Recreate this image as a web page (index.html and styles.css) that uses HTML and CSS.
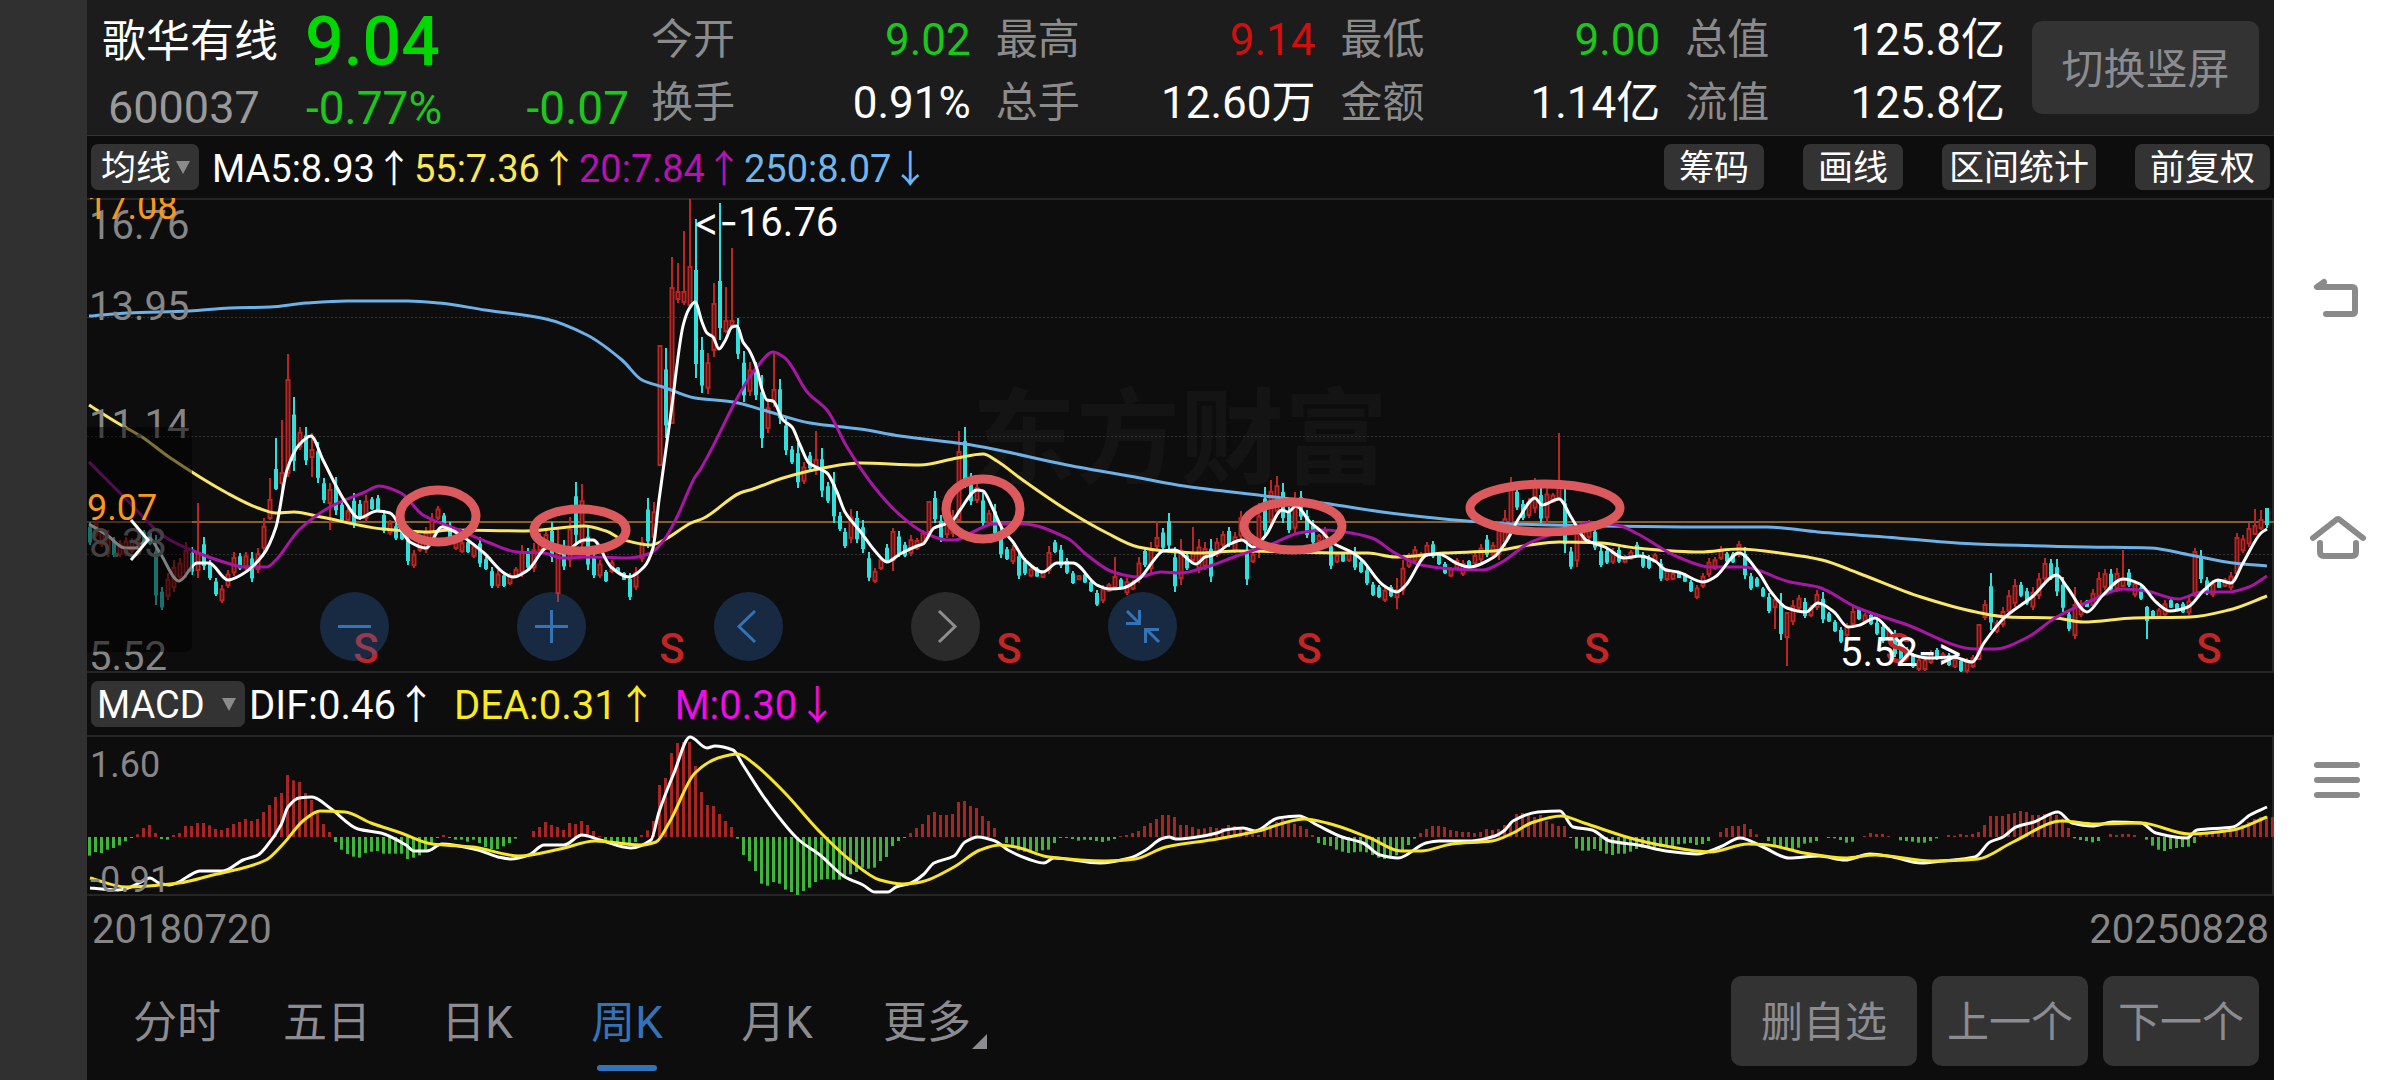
FILE: index.html
```html
<!DOCTYPE html>
<html lang="zh-CN">
<head>
<meta charset="utf-8">
<meta name="viewport" content="width=device-width, initial-scale=1">
<title>歌华有线 600037</title>
<link rel="stylesheet" href="styles.css">
</head>
<body>
<div class="screen">
  <div class="notch"></div>
  <main class="app">
    <header class="quote">
      <div class="stock">
        <div class="stock-row">
          <h1 class="name">歌华有线</h1>
          <span class="price down">9.04</span>
        </div>
        <div class="stock-row stock-sub">
          <span class="code">600037</span>
          <span class="percent down">-0.77%</span>
          <span class="change down">-0.07</span>
        </div>
      </div>
      <dl class="stats">
        <div class="stat"><dt>今开</dt><dd class="down">9.02</dd></div>
        <div class="stat"><dt>最高</dt><dd class="up">9.14</dd></div>
        <div class="stat"><dt>最低</dt><dd class="down">9.00</dd></div>
        <div class="stat"><dt>总值</dt><dd>125.8亿</dd></div>
        <div class="stat"><dt>换手</dt><dd>0.91%</dd></div>
        <div class="stat"><dt>总手</dt><dd>12.60万</dd></div>
        <div class="stat"><dt>金额</dt><dd>1.14亿</dd></div>
        <div class="stat"><dt>流值</dt><dd>125.8亿</dd></div>
      </dl>
      <button class="btn rotate" type="button">切换竖屏</button>
    </header>

    <section class="toolbar">
      <span class="picker picker-ma"><select aria-label="主图指标"><option>均线</option></select></span>
      <p class="legend ma-legend">
        <span class="c-white">MA5:8.93↑</span><span class="c-yellow">55:7.36↑</span><span class="c-purple">20:7.84↑</span><span class="c-blue">250:8.07↓</span>
      </p>
      <div class="tools">
        <button class="chip" type="button">筹码</button>
        <button class="chip" type="button">画线</button>
        <button class="chip chip-tight" type="button">区间统计</button>
        <button class="chip" type="button">前复权</button>
      </div>
    </section>

    <section class="chart">
      <svg class="plot" viewBox="87 198 2187 475" role="img" aria-label="周K线">
        <text class="watermark" x="972" y="476">东方财富</text>
        <path class="grid" d="M87 317.5H2273M87 436.5H2273M87 554.5H2273"/>
        <path class="frame" d="M87 199H2273V672H87"/>
        <path class="last" d="M87 522H2274"/>
        <g id="candles"></g>
        <path class="line s-blue" data-points="89,316 128,313 189,311 230,308 270,307 306,303 347,301 408,301 439,303 485,310 546,319 587,335 622,360 642,380 663,387 695,398 733,402 763,410 810,423 860,429 900,436 965,444 993,449 1067,465 1140,478 1184,486 1265,496 1322,503 1398,514 1467,521 1513,524 1700,527 1767,527 1818,532 1897,538 1976,544 2087,547 2150,548 2190,555 2233,563 2267,566"/>
        <path class="line s-yellow" data-points="89,405 116,422 142,437 169,457 227,493 258,508 276,513 294,512 321,517 383,529 428,532 450,530 526,531 584,526 606,531 624,540 651,545 664,540 691,523 704,518 740,493 753,489 783,478 823,468 860,463 920,465 957,458 983,454 997,461 1020,478 1070,512 1107,533 1138,547 1165,551 1200,553 1238,551 1345,553 1368,553 1395,557 1444,553 1494,551 1529,545 1559,542 1601,543 1636,548 1700,552 1739,549 1787,554 1822,560 1858,573 1921,597 1976,612 2008,617 2055,618 2083,622 2134,618 2190,617 2229,610 2267,596"/>
        <path class="line s-purple" data-points="89,462 125,498 165,537 191,550 227,563 245,567 267,567 276,560 299,530 330,507 365,492 379,486 401,493 423,515 459,530 490,543 517,552 544,553 562,558 593,557 629,558 651,553 664,540 677,517 695,477 700,470 710,452 740,393 757,367 773,352 785,358 808,393 827,410 847,447 875,488 900,515 923,532 947,540 955,540 973,532 993,524 1023,524 1067,538 1087,555 1113,572 1138,577 1161,572 1180,573 1207,567 1234,557 1272,544 1299,533 1326,530 1345,532 1372,538 1395,553 1421,565 1452,569 1483,570 1502,562 1529,543 1559,532 1590,523 1617,525 1636,533 1678,557 1711,567 1743,567 1790,582 1818,587 1858,608 1905,624 1976,649 1996,649 2028,637 2055,618 2095,599 2123,589 2146,591 2178,599 2202,592 2229,592 2249,587 2267,576"/>
        <path class="line s-white" data-points="89,524 107,535 125,548 136,548 149,538 160,553 179,581 197,563 209,563 228,580 241,575 263,555 276,527 287,470 299,445 311,436 323,460 346,503 359,518 377,511 390,513 410,542 426,548 442,527 457,533 484,553 504,573 513,577 528,570 548,547 562,553 584,540 593,540 611,567 629,577 644,567 653,548 659,500 671,413 683,326 689,309 695,302 702,322 707,333 713,337 719,349 725,341 732,327 737,326 743,342 749,350 757,369 762,389 767,400 773,401 783,420 792,427 800,445 809,463 820,469 827,473 837,492 845,512 860,531 875,551 887,562 900,554 917,546 923,544 934,528 945,524 953,520 960,510 977,490 983,491 993,509 1003,530 1013,542 1025,560 1043,572 1057,563 1073,563 1097,585 1110,589 1123,588 1140,578 1154,560 1163,551 1175,550 1196,564 1205,557 1213,555 1230,544 1242,540 1253,547 1266,535 1282,510 1288,512 1296,506 1310,522 1322,532 1333,543 1353,553 1362,560 1383,585 1397,592 1406,585 1427,555 1439,554 1456,563 1469,567 1494,557 1506,542 1519,518 1535,498 1542,505 1559,499 1571,517 1586,540 1605,547 1624,558 1640,556 1655,561 1666,570 1678,572 1703,582 1715,577 1739,553 1759,573 1771,592 1787,608 1806,612 1818,603 1834,612 1848,627 1860,625 1875,618 1889,630 1913,655 1929,658 1953,657 1972,662 1984,643 2004,618 2032,597 2057,575 2067,587 2087,612 2103,595 2123,579 2140,584 2156,602 2170,611 2188,607 2204,590 2218,580 2231,583 2243,563 2261,533 2267,529"/>
        <g class="axis">
          <text x="89" y="239">16.76</text>
          <text x="89" y="320">13.95</text>
          <text x="89" y="438">11.14</text>
          <text x="89" y="557">8.33</text>
          <text x="89" y="670">5.52</text>
        </g>
        <path class="drawer" d="M87 427H184Q192 427 192 435V644Q192 652 184 652H87Z"/>
        <path class="drawer-arrow" d="M131 520L148 540L131 560"/>
        <text class="cursor" x="87" y="219">17.08</text>
        <text class="cursor" x="87" y="520">9.07</text>
        <g class="signal">
          <text x="366" y="663">S</text><text x="672" y="663">S</text><text x="1009" y="663">S</text><text x="1309" y="663">S</text><text x="1597" y="663">S</text><text x="1898" y="663">S</text><text x="2209" y="663">S</text>
        </g>
        <text class="extreme" x="693" y="236"><tspan class="arrow">&lt;-</tspan>16.76</text>
        <text class="extreme" x="1840" y="666">5.52<tspan class="arrow">-&gt;</tspan></text>
        <g class="marks">
          <ellipse cx="438" cy="516" rx="38" ry="26"/>
          <ellipse cx="580" cy="530" rx="46" ry="21"/>
          <ellipse cx="983" cy="509" rx="37" ry="30"/>
          <ellipse cx="1293" cy="526" rx="49" ry="24"/>
          <ellipse cx="1545" cy="508" rx="75" ry="24"/>
        </g>
      </svg>
      <div class="controls">
        <button class="round" type="button" aria-label="缩小"><svg viewBox="0 0 69 69"><path d="M18 34.5H51"/></svg></button>
        <button class="round" type="button" aria-label="放大"><svg viewBox="0 0 69 69"><path d="M18 34.5H51M34.5 18V51"/></svg></button>
        <button class="round" type="button" aria-label="左移"><svg viewBox="0 0 69 69"><path d="M41 19L25 34.5L41 50"/></svg></button>
        <button class="round round-off" type="button" aria-label="右移"><svg viewBox="0 0 69 69"><path d="M28 19L44 34.5L28 50"/></svg></button>
        <button class="round" type="button" aria-label="收起"><svg viewBox="0 0 69 69"><path d="M19 19L32 32M18 31.5H31.5V18M51 50L38 37M51 37.5H37.5V51"/></svg></button>
      </div>
    </section>

    <section class="toolbar">
      <span class="picker picker-macd"><select aria-label="副图指标"><option>MACD</option></select></span>
      <p class="legend macd-legend">
        <span class="c-white">DIF:0.46↑</span><span class="c-dea">DEA:0.31↑</span><span class="c-m">M:0.30↓</span>
      </p>
    </section>

    <section class="chart">
      <svg class="plot" viewBox="87 735 2187 161" role="img" aria-label="MACD">
        <path class="frame" d="M87 736H2273V895H87"/>
        <g id="bars"></g>
        <path class="line s-white" data-points="90,888 102,889 118,890 128,888 139,883 150,878 159,883 169,885 179,882 187,877 200,871 223,871 243,860 258,855 266,847 281,825 288,807 299,798 312,797 330,808 358,829 381,833 406,845 414,851 427,851 442,844 478,850 498,857 511,859 529,855 544,845 564,845 582,835 600,840 631,848 651,840 659,812 674,773 690,737 707,748 715,746 733,750 743,765 766,800 799,840 820,855 845,877 863,885 875,892 888,892 896,887 911,883 924,874 934,863 954,856 965,842 978,837 995,841 1008,850 1028,859 1044,863 1054,858 1100,863 1130,858 1146,850 1161,839 1169,837 1176,839 1197,837 1217,833 1225,830 1243,828 1255,831 1278,818 1299,816 1317,825 1342,837 1363,843 1380,855 1398,858 1426,843 1439,841 1472,841 1495,836 1505,830 1513,821 1538,812 1560,811 1573,827 1592,830 1610,841 1638,845 1666,851 1697,854 1720,847 1740,838 1763,847 1789,858 1819,856 1845,860 1870,854 1893,857 1921,863 1942,861 1975,857 1990,842 2003,837 2016,827 2034,822 2058,812 2072,823 2092,826 2113,822 2141,823 2156,833 2187,838 2197,830 2233,827 2250,815 2267,807"/>
        <path class="line s-dea" data-points="90,878 126,887 179,883 213,875 243,868 266,860 284,843 304,820 320,811 345,812 371,823 401,833 432,844 473,847 519,856 560,849 595,841 641,845 656,842 669,823 695,773 718,758 738,754 753,763 784,792 820,832 850,860 880,880 903,884 921,882 954,867 980,850 1000,845 1016,847 1049,857 1105,861 1135,859 1166,847 1217,839 1258,831 1304,819 1327,823 1370,838 1401,851 1421,851 1452,844 1492,841 1513,833 1531,823 1561,816 1584,823 1630,838 1660,845 1710,852 1748,844 1768,845 1804,853 1845,858 1875,855 1932,861 1978,859 2013,842 2062,821 2095,824 2141,823 2189,834 2233,830 2267,817"/>
        <g class="axis axis-small">
          <text x="90" y="777">1.60</text>
          <text x="90" y="892">-0.91</text>
        </g>
      </svg>
    </section>

    <div class="dates"><time>20180720</time><time>20250828</time></div>

    <footer class="footer">
      <nav class="tabs">
        <button class="tab" type="button">分时</button>
        <button class="tab" type="button">五日</button>
        <button class="tab" type="button">日K</button>
        <button class="tab tab-on" type="button" aria-current="page">周K</button>
        <button class="tab" type="button">月K</button>
        <button class="tab tab-more" type="button">更多</button>
      </nav>
      <div class="actions">
        <button class="btn action-wide" type="button">删自选</button>
        <button class="btn action" type="button">上一个</button>
        <button class="btn action" type="button">下一个</button>
      </div>
    </footer>
  </main>
  <nav class="system">
    <button class="sys" type="button" aria-label="返回"><svg viewBox="0 0 60 60"><path d="M17 13L10 18H45Q48 18 48 21V42Q48 45 45 45H19"/></svg></button>
    <button class="sys" type="button" aria-label="主页"><svg viewBox="0 0 60 60"><path d="M6 28L29 10Q31 8 33 10L56 28M13 33V42Q13 46 17 46H45Q49 46 49 42V33"/></svg></button>
    <button class="sys" type="button" aria-label="菜单"><svg viewBox="0 0 60 60"><path d="M10 14H50M10 29H50M10 44H50"/></svg></button>
  </nav>
</div>
<script src="chart.js"></script>
</body>
</html>
```

FILE: styles.css
```css
* { box-sizing: border-box; }

body {
  margin: 0;
  background: #fff;
  color: #fff;
  font-family: Roboto, "Noto Sans CJK SC", sans-serif;
  line-height: 1;
}

button, select {
  margin: 0;
  padding: 0;
  border: 0;
  background: none;
  color: inherit;
  font: inherit;
}

.screen { display: flex; min-height: 100vh; }
.notch { flex: 0 0 87px; background: #303030; }
.app { flex: 1; min-width: 0; display: flex; flex-direction: column; background: #0d0d0d; }

.down { color: #1bc71b; }
.up { color: #cf100e; }

/* Quote header */
.quote {
  display: flex;
  align-items: center;
  height: 136px;
  padding-right: 15px;
  background: #1c1c1c;
  border-bottom: 1px solid #333;
}
.stock { flex: 0 0 564px; padding: 12px 0 0 15px; }
.stock-row { display: flex; align-items: center; height: 68px; }
.name { margin: 0 27px 0 0; font-size: 44px; font-weight: 400; }
.price { color: #00d900; font-size: 68px; font-weight: 500; }
.stock-sub { padding: 0 22px 0 6px; height: 64px; }
.code { width: 198px; color: #999; font-size: 45px; }
.percent, .change { font-size: 46px; }
.change { margin-left: auto; }

.stats {
  flex: 1;
  display: grid;
  grid-template-columns: repeat(4, 1fr);
  column-gap: 25px;
  margin: 0;
  padding-top: 8px;
}
.stat { display: flex; align-items: center; justify-content: space-between; height: 63px; }
.stat dt { color: #8b8b8b; font-size: 42px; }
.stat dd { margin: 0; font-size: 44px; }

.btn {
  padding-top: 4px;
  border-radius: 10px;
  background: #333;
  color: #8b8b90;
  font-size: 42px;
  white-space: nowrap;
}
.rotate { flex: 0 0 227px; height: 93px; margin-left: 27px; }

/* Indicator bars */
.toolbar { display: flex; align-items: center; height: 62px; padding: 0 4px; }
.picker {
  position: relative;
  flex: none;
  height: 46px;
  border-radius: 7px;
  background: #333;
}
.picker select { width: 100%; height: 100%; padding: 2px 0 0 10px; appearance: none; }
.picker::after {
  content: "";
  position: absolute;
  top: 17px;
  right: 9px;
  width: 14px;
  height: 13px;
  background: #8b8b8b;
  clip-path: polygon(0 0, 100% 0, 50% 100%);
  pointer-events: none;
}
.picker-ma { width: 108px; font-size: 35px; }
.picker-macd { width: 154px; font-size: 38px; }
.picker-macd select { padding-left: 6px; }
.legend { display: flex; margin: 0; padding-top: 4px; white-space: nowrap; }
.ma-legend { padding-left: 13px; gap: 1px; font-size: 38px; }
.macd-legend { gap: 18px; padding-left: 4px; font-size: 40px; }
.c-white { color: #fff; }
.c-yellow { color: #fbe858; }
.c-purple { color: #b512b1; }
.c-blue { color: #6fb6ee; }
.c-dea { color: #f9ea22; }
.c-m { color: #ef0ce6; }

.tools { display: flex; gap: 39px; margin-left: auto; }
.chip {
  height: 46px;
  padding: 2px 15px 0;
  border-radius: 7px;
  background: #333;
  font-size: 35px;
}
.chip-tight { padding: 2px 7px 0; }

/* Charts */
.chart { position: relative; }
.plot { display: block; width: 100%; height: auto; }
.grid { stroke: #333; stroke-width: 1; stroke-dasharray: 2 2; fill: none; }
.frame { stroke: #252525; stroke-width: 2; fill: none; }
.last { stroke: #86602f; stroke-width: 2; }
.watermark { fill: #141414; font-size: 104px; font-weight: 700; }
.line { fill: none; stroke-width: 3; stroke-linejoin: round; }
.s-white { stroke: #fff; }
.s-yellow { stroke: #fbe767; }
.s-purple { stroke: #a916a6; }
.s-blue { stroke: #6cb2e8; }
.s-dea { stroke: #f6e52c; }
.rise { stroke: #bd2523; fill: #0d0d0d; stroke-width: 2; }
.fall { stroke: #2fe0dc; fill: #2fe0dc; stroke-width: 2; }
.bar-up { fill: #a92522; }
.bar-down { fill: #40b53b; }
.axis { fill: #868686; font-size: 40px; }
.axis-small { font-size: 36px; }
.cursor { fill: #f8971d; font-size: 36px; }
.drawer { fill: #000; fill-opacity: .5; }
.drawer-arrow { fill: none; stroke: #fff; stroke-width: 3; }
.signal { fill: #c42523; font-size: 42px; font-weight: 500; text-anchor: middle; }
.extreme { fill: #fff; font-size: 40px; }
.arrow { font-family: Inter, sans-serif; font-feature-settings: "calt" 0, "liga" 0; }
.marks { fill: none; stroke: #dc595d; stroke-width: 9; }

.controls {
  position: absolute;
  left: 233px;
  bottom: 12px;
  display: flex;
  gap: 128px;
}
.round {
  width: 69px;
  height: 69px;
  border-radius: 50%;
  background: rgba(47, 107, 178, .32);
  color: #3573b9;
}
.round-off { background: rgba(110, 110, 110, .32); color: #8f8f8f; }
.round svg { display: block; fill: none; stroke: currentColor; stroke-width: 3; }

.dates {
  display: flex;
  justify-content: space-between;
  align-items: center;
  height: 66px;
  padding: 2px 5px 0;
  color: #868686;
  font-size: 40px;
}

/* Footer */
.footer { display: flex; align-items: center; justify-content: space-between; height: 118px; padding: 0 15px; }
.tabs { display: flex; height: 100%; }
.tab {
  position: relative;
  width: 150px;
  padding-top: 3px;
  color: #8b8b90;
  font-size: 44px;
}
.tab-on { color: #3573b9; }
.tab-on::after {
  content: "";
  position: absolute;
  left: 45px;
  bottom: 9px;
  width: 60px;
  height: 6px;
  border-radius: 3px;
  background: #3573b9;
}
.tab-more::after {
  content: "";
  position: absolute;
  right: 15px;
  bottom: 31px;
  width: 15px;
  height: 15px;
  background: #8b8b90;
  clip-path: polygon(100% 0, 100% 100%, 0 100%);
}
.actions { display: flex; gap: 15px; }
.action, .action-wide { width: 156px; height: 90px; }
.action-wide { width: 186px; }

/* System navigation */
.system {
  flex: 0 0 126px;
  display: flex;
  flex-direction: column;
  align-items: center;
  justify-content: center;
  gap: 181px;
  background: #fff;
}
.sys { width: 60px; height: 60px; }
.sys svg { display: block; fill: none; stroke: #8a8a8a; stroke-width: 6; stroke-linecap: round; stroke-linejoin: round; }
```

FILE: chart.js
```js
const NS = "http://www.w3.org/2000/svg";
const FIRST = 90;
const STEP = 5.996;

// One candle per entry: r (rise) or c (fall), high, low, then the body when it is much shorter.
const candles = `
c522-545 r520-537 r528-547 r530-557 c537-557 r540-557 r537-556 r538-553 r535-550 c530-543
c530-545 c535-605 c587-610 r573-600 r560-592 r558-580 r542-578 c547-575 r503-578-553-570 c537-570
c560-580 c578-596 r585-603 r570-588 r552-576 c553-570 r552-570 c552-582 r548-573 r518-553
r478-520-500-518 c438-490-470-488 r420-491-473-483 r354-477-380-473 c397-471 r427-450 c427-465 r433-477-450-457 c442-483 c478-503
r483-530-490-503 c477-515 c500-523 r508-522 c493-528 c500-520 r495-522 c497-510 c495-512 c510-533
r520-535 c523-540 c527-540 c532-565 r550-568 r537-552 r527-553 r513-543 r506-520 c513-527
c522-540 r537-550 r540-553 c540-553 r543-558 c537-567 c557-570 c567-588 r570-588 c573-587
r573-585 r567-578 r545-577 c548-570 r543-572 r533-553 r530-550 c522-562 r527-602-553-593 c540-570
r517-567 c482-543 r484-553 c527-570 c553-578 r560-578 c570-582 r560-573 c567-573 c572-580
c573-600 r567-590 r537-562 c498-548 r502-543 r345-466-346-465 c348-438 r257-423-288-423 r263-303-292-299 r231-305-292-302
r199-305-267-305 c219-378-271-363 c337-393 r353-394 r283-357-304-350 c203-340-282-327 r287-333-321-331 r248-327-321-325 c318-359 c351-402
r362-396 c362-400 c375-448 r400-433 r352-407-390-402 c379-424 c417-455 c446-464 c443-488 r462-484
c452-470 r431-475-460-470 c448-497 c482-503 c472-523 c512-531 c528-548 r509-543 c511-543 c520-553
c552-581 r568-583 r557-570 c544-563 r528-571-532-560 c531-557 c542-557 r535-556 r538-550 r530-545
r501-533-502-532 c491-523 c515-542 r513-538 r510-537 r431-520-452-520 c427-488 c473-505 r483-503 c493-527
r510-525 c504-537 c527-558 c547-560 r545-564 c550-579 c558-575 r567-577 c567-577 r570-578
r546-574 c540-553 c545-568 c558-574 c571-584 r575-580 c573-583 c580-592 c590-606 r585-603
r583-592 r557-587-577-587 c578-588 r578-595 r580-590 r557-583 c547-567 r542-573 r521-550-538-546 c528-550
c513-550 c547-592 r539-585 c552-570 r527-563-553-560 r539-573 r542-570 c539-582 r538-557 r531-547
c527-547 r532-553 r511-540 c540-585 r552-563 r503-558 c487-537 r480-527 r476-517 c483-523
c507-533 r492-534 c491-520 c510-538 c520-545 r534-542 r527-547 c540-569 r553-563 c552-562
r550-562 c547-570 c560-573 c567-585 c582-596 c585-598 r587-602 c585-597 r578-609-590-597 r560-595
r553-568 r546-563 r552-562 r542-557 c541-558 c553-565 c562-574 r567-577 r558-570 r560-576
c560-568 r553-565 r544-562 c535-557 r542-557 r521-560 r510-547 r477-527-488-525 c487-510 c500-520
r498-518 r478-513 c487-523 r485-523 r493-503 r433-500-487-498 c488-553 c547-569 r523-567 r523-543
r520-540 c527-550 c547-567 c548-564 r548-564 c547-563 r555-563 r550-560 c542-557 c552-568
c555-569 r553-563 c559-581 r568-581 r572-580 c572-578 c573-582 c580-592 r585-599 r573-588
r558-577 r557-570 r546-560 c552-562 c552-563 r541-557 c547-579 c573-590 c577-587 c587-597
c593-613 r597-629-600-607 c593-640 r612-666-613-637 r600-625 r595-610 c598-618 r605-617 r590-610 c592-623
c612-622 c620-632 c627-643 r623-637 r607-627 c607-620 r613-623 c613-625 c620-635 c623-643
r627-640 c630-657 c643-662 c647-658 c653-668 r657-671 r657-671 r650-664 c648-660 r652-662
c653-666 r657-668 c658-672 r658-673 r655-668 r624-660-625-659 r600-620 c573-630 r620-633 r607-627
r590-615 r579-607 c582-597 c588-605 r587-610 r573-599 r558-582 c559-580 c559-596 c577-612
c610-631 r587-639-605-635 r600-617 c600-607 r589-608 r572-600 r569-590 c569-592 r568-592 r550-587-580-586
c569-587 r580-597 c585-600 c606-639-608-620 c610-618 r608-618 r600-617 c599-608 c603-610 c602-613
r597-615 r548-597-552-595 c550-583 c577-595 r580-597 c580-588 r578-587 r572-590 r533-575-538-573 r535-553
r523-547 r509-535-526-534 r510-530-520-528 c508-528-509-524`.trim().split(/\s+/);

// MACD histogram in thirds of a pixel above or below zero.
const bars = [
  -56, -45, -48, -38, -33, -25, -13, -2, 8, 27, 36, 12, -6, -8, 6, 12, 33, 33, 42, 42, 35, 24, 21, 27, 39, 45, 54, 48, 54, 75,
  96, 120, 132, 186, 170, 165, 132, 111, 72, 39, 15, -15, -38, -51, -59, -62, -48, -44, -42, -50, -50, -50, -50, -66, -62, -55,
  -40, -18, -2, 6, -2, -8, -8, -14, -8, -18, -30, -36, -36, -28, -18, -5, 0, 0, 18, 30, 45, 36, 30, 21, 42, 39, 48, 36, 18, 2,
  -12, -20, -20, -20, -26, -15, 6, 20, 48, 156, 177, 252, 282, 285, 285, 213, 135, 96, 93, 69, 48, 30, -5, -54, -72, -102, -140,
  -146, -135, -140, -158, -165, -174, -162, -152, -135, -128, -126, -128, -128, -120, -112, -105, -92, -95, -92, -72, -60, -27,
  -12, -3, 12, 27, 39, 66, 75, 66, 66, 69, 105, 108, 93, 87, 63, 48, 27, 0, -18, -30, -40, -44, -46, -44, -40, -38, -18, -2, -2,
  -6, -11, -8, -9, -12, -15, -11, -6, 3, 6, 12, 18, 33, 42, 54, 66, 66, 60, 36, 36, 30, 24, 26, 30, 27, 27, 36, 33, 30, 30, 10,
  6, 30, 36, 45, 54, 48, 40, 33, 24, 6, -18, -24, -27, -38, -44, -48, -46, -44, -46, -54, -62, -66, -60, -55, -42, -24, -5, 12,
  24, 33, 33, 30, 21, 18, 15, 15, 12, 15, 24, 21, 24, 36, 45, 69, 72, 66, 60, 66, 48, 40, 33, 33, -2, -35, -41, -41, -36, -42,
  -50, -54, -50, -50, -44, -36, -32, -30, -32, -30, -30, -28, -22, -20, -18, -24, -21, -12, 0, 15, 27, 33, 33, 39, 24, 8, 0,
  -12, -24, -30, -36, -42, -32, -20, -17, -12, 0, -2, -4, -9, -17, -14, 0, 3, 12, 9, 9, 3, 0, -10, -12, -14, -17, -17, -12, -4,
  0, 6, 4, 9, 6, 9, 15, 36, 63, 63, 63, 69, 72, 78, 75, 66, 66, 69, 73, 66, 55, 27, -4, -9, -12, -16, -12, 0, 9, 6, 9, 9, 6, 0,
  -8, -26, -38, -42, -36, -33, -30, -29, -18, 15, 12, 14, 16, 18, 20, 24, 36, 45, 54, 60, 63, 60];

function add(parent, tag, attrs) {
  const el = document.createElementNS(NS, tag);
  for (const key in attrs) el.setAttribute(key, attrs[key]);
  parent.appendChild(el);
}

const candleLayer = document.getElementById("candles");
candles.forEach((entry, i) => {
  const rise = entry[0] === "r";
  const [high, low, bodyTop, bodyBottom] = entry.slice(1).split("-").map(Number);
  const top = bodyTop || high + (low - high) * 0.25;
  const bottom = bodyBottom || low - (low - high) * 0.15;
  const x = Math.round(FIRST + i * STEP);
  const cls = rise ? "rise" : "fall";
  add(candleLayer, "path", { class: cls, d: `M${x} ${high}V${low}` });
  const half = rise ? 1.5 : 1;
  add(candleLayer, "rect", { class: cls, x: x - half, y: top, width: half * 2, height: Math.max(2, bottom - top) });
});

const ZERO = 837;
const barLayer = document.getElementById("bars");
bars.forEach((value, i) => {
  if (!value) return;
  const size = Math.max(1, Math.abs(value) / 3);
  add(barLayer, "rect", {
    class: value > 0 ? "bar-up" : "bar-down",
    x: Math.round(FIRST + i * STEP) - 2,
    y: value > 0 ? ZERO - size : ZERO,
    width: 3,
    height: size
  });
});

// Join the points of each average with a smooth curve that passes through all of them.
document.querySelectorAll("[data-points]").forEach((path) => {
  const pts = path.dataset.points.split(" ").map((p) => p.split(",").map(Number));
  const slope = pts.map((p, i) => {
    if (i === 0 || i === pts.length - 1) return 0;
    const before = (p[1] - pts[i - 1][1]) / (p[0] - pts[i - 1][0]);
    const after = (pts[i + 1][1] - p[1]) / (pts[i + 1][0] - p[0]);
    return before * after <= 0 ? 0 : (2 * before * after) / (before + after);
  });
  slope[0] = (pts[1][1] - pts[0][1]) / (pts[1][0] - pts[0][0]);
  const n = pts.length - 1;
  slope[n] = (pts[n][1] - pts[n - 1][1]) / (pts[n][0] - pts[n - 1][0]);
  let d = `M${pts[0]}`;
  for (let i = 0; i < n; i++) {
    const [x0, y0] = pts[i];
    const [x1, y1] = pts[i + 1];
    const third = (x1 - x0) / 3;
    d += `C${x0 + third} ${y0 + slope[i] * third} ${x1 - third} ${y1 - slope[i + 1] * third} ${x1} ${y1}`;
  }
  path.setAttribute("d", d);
});
```
